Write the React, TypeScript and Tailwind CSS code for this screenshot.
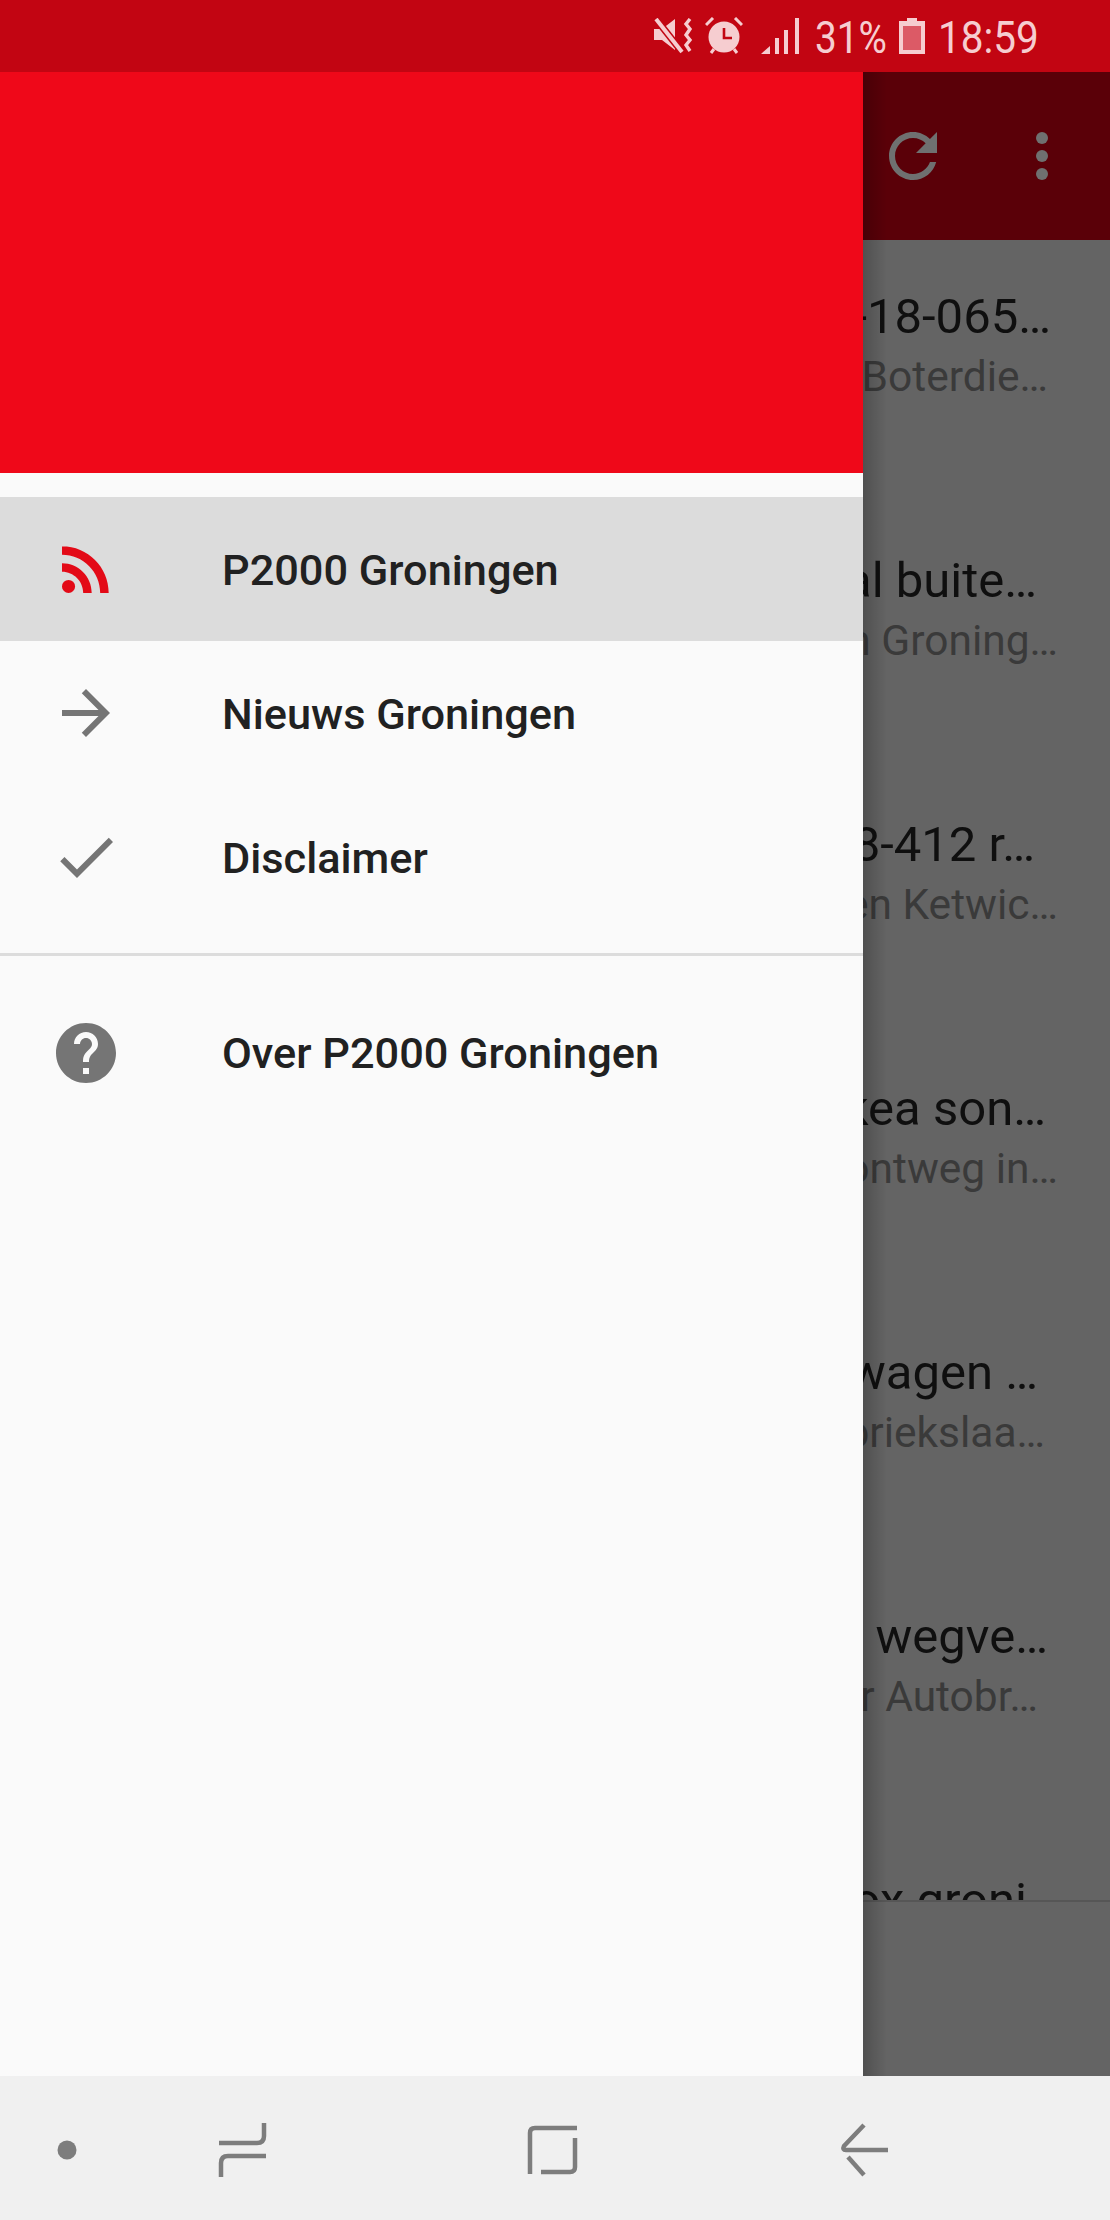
const menuItems = [
  { label: "P2000 Groningen", active: true },
  { label: "Nieuws Groningen", active: false },
  { label: "Disclaimer", active: false },
];

const rows = [
  { title: "1-18-065…", titlePad: "pr-[59px]", sub: "a Boterdie…", subPad: "pr-[62px]" },
  { title: "al buite…", titlePad: "pr-[73px]", sub: "en Groning…", subPad: "pr-[52px]" },
  { title: "18-412 r…", titlePad: "pr-[75px]", sub: "en Ketwic…", subPad: "pr-[52px]" },
  { title: "kea son…", titlePad: "pr-[64px]", sub: "ontweg in…", subPad: "pr-[52px]" },
  { title: "wagen …", titlePad: "pr-[72px]", sub: "briekslaa…", subPad: "pr-[65px]" },
  { title: "e wegve…", titlePad: "pr-[62px]", sub: "er Autobr…", subPad: "pr-[72px]" },
  { title: "box groni", titlePad: "pr-[83px]", sub: "", subPad: "" },
];

const MenuIcon = ({ index }: { index: number }) => {
  if (index === 0) {
    return (
      <svg viewBox="0 0 24 24" className="w-[72px] h-[72px] fill-[#e30a17]">
        <circle cx="6.18" cy="17.82" r="2.18" />
        <path d="M4 4.44v2.83c7.03 0 12.73 5.7 12.73 12.73h2.83c0-8.59-6.97-15.56-15.56-15.56z" />
        <path d="M4 10.1v2.83c3.9 0 7.07 3.17 7.07 7.07h2.83c0-5.47-4.43-9.9-9.9-9.9z" />
      </svg>
    );
  }
  if (index === 1) {
    return (
      <svg viewBox="0 0 24 24" className="w-[72px] h-[72px] fill-[#757575]">
        <path d="M12 4l-1.41 1.41L16.17 11H4v2h12.17l-5.58 5.59L12 20l8-8z" />
      </svg>
    );
  }
  return (
    <svg viewBox="0 0 24 24" className="w-[72px] h-[72px] fill-[#757575]">
      <path d="M9 16.17L4.83 12l-1.42 1.41L9 19 21 7l-1.41-1.41z" />
    </svg>
  );
};

const StatusBar = () => (
  <div className="flex items-center justify-end h-[72px] pr-[74px] bg-[#c20512] text-[#f6cdd0]">
    <svg viewBox="0 0 40 36" className="w-[40px] h-[36px] mb-[1px]">
      <path d="M1 11h8L22 1v31L9 22H1z" fill="#f6cdd0" />
      <path d="M3 1l26 33" stroke="#c20512" strokeWidth="7" />
      <path d="M3 1l26 33" stroke="#f6cdd0" strokeWidth="4" />
      <path d="M37 1l-4 5 4 5-4 6 4 5-4 5 4 6" stroke="#f6cdd0" strokeWidth="3.4" fill="none" />
    </svg>
    <svg viewBox="0 0 38 38" className="w-[38px] h-[38px] ml-[12px]">
      <circle cx="19" cy="20" r="15.5" fill="#f6cdd0" />
      <path d="M1 8L8 1M37 8L30 1M6 36l3-4M32 36l-3-4" stroke="#f6cdd0" strokeWidth="3" />
      <path d="M19 11v10h8" stroke="#c20512" strokeWidth="2.6" fill="none" />
    </svg>
    <svg viewBox="0 0 40 36" className="w-[40px] h-[36px] ml-[18px] fill-[#f6cdd0]">
      <path d="M0 36L9 28V36z" />
      <rect x="14" y="20" width="4" height="16" />
      <rect x="23" y="12" width="4" height="24" />
      <rect x="34" y="0" width="4" height="36" />
    </svg>
    <span className="w-[72px] ml-[14px] mt-[2px] text-[45px] leading-none font-[Roboto,sans-serif] whitespace-nowrap origin-left [transform:scaleX(.86)]">
      31%
    </span>
    <svg viewBox="0 0 26 36" className="w-[26px] h-[36px] ml-[12px]">
      <path d="M8 0h10v3h8v33H0V3h8z" fill="#f6cdd0" />
      <rect x="4" y="8" width="18" height="24" fill="#dc5a66" />
    </svg>
    <span className="w-[98px] ml-[13px] mt-[2px] text-[45px] leading-none font-[Roboto,sans-serif] whitespace-nowrap origin-left [transform:scaleX(.9)]">
      18:59
    </span>
  </div>
);

const NavBar = () => (
  <div className="flex items-center h-[144px] bg-[#f0f0f0]">
    <svg viewBox="0 0 1110 144" className="w-full h-[144px]" fill="none" stroke="#7d7d7d" strokeWidth="4.5">
      <circle cx="67" cy="74" r="9.5" fill="#7d7d7d" stroke="none" />
      <path d="M264 47v13q0 7-7 7h-38" />
      <path d="M266 80h-38q-7 0-7 7v14" />
      <path d="M577 52h-42q-5 0-5 5v41" />
      <path d="M575 62v29q0 5-5 5h-29" />
      <path d="M864 49l-20 21q-2 4 2 4h42" />
      <path d="M848 81l16 18" />
    </svg>
  </div>
);

export default function App() {
  return (
    <div className="flex flex-col w-[1110px] h-[2220px] overflow-hidden font-[Roboto,sans-serif]">
      <StatusBar />

      <div className="flex flex-1 min-h-0">
        <div className="flex flex-col w-[863px] bg-[#fafafa]">
          <div className="h-[401px] bg-[#ef0819]" />
          <div className="pt-[24px]">
            {menuItems.map((item, i) => (
              <div
                key={item.label}
                className={`flex items-center h-[144px] pl-[50px] ${item.active ? "bg-[#dcdcdc]" : ""}`}
              >
                <MenuIcon index={i} />
                <span className="ml-[100px] pt-[5px] text-[43.3px] font-medium text-[#212121]">{item.label}</span>
              </div>
            ))}
          </div>
          <div className="mt-[24px] h-[3px] bg-[#dcdcdc]" />
          <div className="flex items-center h-[144px] mt-[25px] pl-[50px]">
            <svg viewBox="0 0 24 24" className="w-[72px] h-[72px] fill-[#757575]">
              <path d="M12 2C6.48 2 2 6.48 2 12s4.48 10 10 10 10-4.48 10-10S17.52 2 12 2zm1 17h-2v-2h2v2zm2.07-7.75l-.9.92C13.45 12.9 13 13.5 13 15h-2v-.5c0-1.1.45-2.1 1.17-2.83l1.24-1.26c.37-.36.59-.86.59-1.41 0-1.1-.9-2-2-2s-2 .9-2 2H8c0-2.21 1.79-4 4-4s4 1.79 4 4c0 .88-.36 1.68-.93 2.25z" />
            </svg>
            <span className="ml-[100px] pt-[3px] text-[43.3px] font-medium text-[#212121]">Over P2000 Groningen</span>
          </div>
        </div>

        <div className="relative flex flex-col w-[247px] overflow-hidden bg-[#646464]">
          <div className="flex items-center h-[168px] pl-[14px] bg-[#5a0008]">
            <svg viewBox="0 0 24 24" className="w-[72px] h-[72px] fill-[#6f7070]">
              <path d="M17.65 6.35C16.2 4.9 14.21 4 12 4c-4.42 0-7.99 3.58-7.99 8s3.57 8 7.99 8c3.73 0 6.84-2.55 7.73-6h-2.08c-.82 2.33-3.04 4-5.65 4-3.31 0-6-2.69-6-6s2.69-6 6-6c1.66 0 3.14.69 4.22 1.78L13 11h7V4l-2.35 2.35z" />
            </svg>
            <svg viewBox="0 0 24 24" className="w-[72px] h-[72px] ml-[57px] fill-[#6f7070]">
              <circle cx="12" cy="6" r="2" />
              <circle cx="12" cy="12" r="2" />
              <circle cx="12" cy="18" r="2" />
            </svg>
          </div>

          <div className="h-[1660px] overflow-hidden">
            {rows.map((row) => (
              <div key={row.title} className="h-[264px] pt-[47px] overflow-hidden">
                <div className={`flex justify-end h-[60px] whitespace-nowrap text-[49px] leading-[60px] text-[#0f0f0f] ${row.titlePad}`}>
                  {row.title}
                </div>
                <div className={`flex justify-end h-[60px] whitespace-nowrap text-[42.5px] leading-[60px] text-[#3a3a3a] ${row.subPad}`}>
                  {row.sub}
                </div>
              </div>
            ))}
          </div>

          <div className="flex-1 border-t-2 border-[#565656]" />

          {/* schaduw van de drawer */}
          <div className="absolute inset-y-0 left-0 w-[24px] bg-gradient-to-r from-[#00000033] to-transparent" />
        </div>
      </div>

      <NavBar />
    </div>
  );
}
